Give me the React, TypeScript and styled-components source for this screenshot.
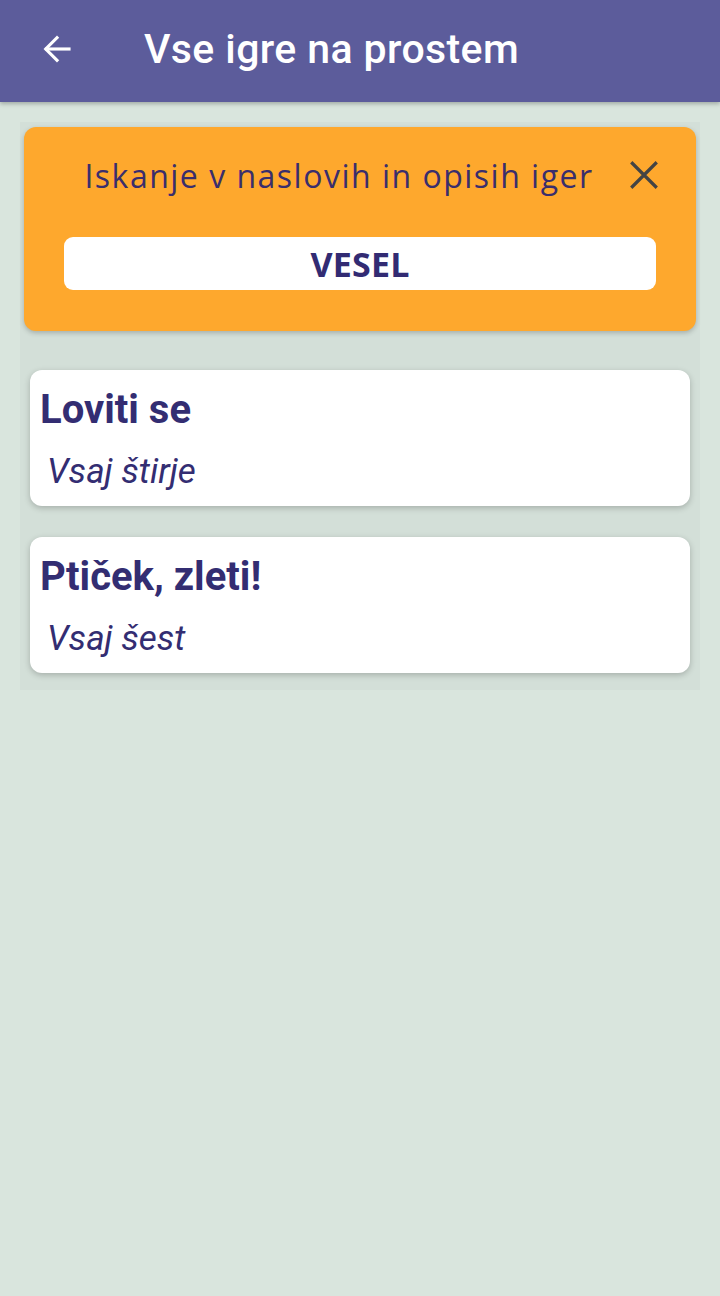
import React from "react";
import styled, { createGlobalStyle } from "styled-components";

const Global = createGlobalStyle`
  html, body { margin: 0; padding: 0; background: #d9e5dd; }
  body { font-family: Roboto, "Noto Sans", sans-serif; }
  * { box-sizing: border-box; }
`;

const Page = styled.div`
  width: 720px;
  min-height: 1296px;
  background: #d9e5dd;
`;

const Header = styled.header`
  height: 102px;
  background: #5c5c9b;
  display: flex;
  align-items: center;
  padding-left: 38px;
  padding-bottom: 4px;
  box-shadow: 0 2px 4px rgba(0, 0, 0, 0.25);
`;

const BackButton = styled.button`
  width: 38px;
  height: 38px;
  background: none;
  border: 0;
  padding: 0;
  display: flex;
  align-items: center;
  justify-content: center;
  margin-right: 68px;
`;

const Title = styled.h1`
  margin: 0;
  color: #ffffff;
  font-family: Roboto, sans-serif;
  font-weight: 500;
  font-size: 41px;
  letter-spacing: 0.4px;
  line-height: 1;
`;

const Main = styled.main`
  padding: 20px 20px;
`;

const Panel = styled.section`
  background: #d3dfd8;
  padding: 5px 4px 17px;
  display: flex;
  flex-direction: column;
`;

const SearchCard = styled.div`
  background: #fea82d;
  border-radius: 12px;
  box-shadow: 0 2px 5px rgba(0, 0, 0, 0.22);
  padding: 24px 34px 41px 40px;
  display: flex;
  flex-direction: column;
`;

const SearchHead = styled.div`
  display: flex;
  align-items: center;
  justify-content: space-between;
  height: 48px;
  margin-bottom: 38px;
`;

const SearchLabel = styled.span`
  flex: 1;
  text-align: center;
  color: #3a2e6c;
  font-family: "Open Sans", sans-serif;
  font-size: 32px;
  letter-spacing: 1.5px;
  padding-right: 12px;
`;

const CloseButton = styled.button`
  width: 36px;
  height: 36px;
  background: none;
  border: 0;
  padding: 0;
  display: flex;
  align-items: center;
  justify-content: center;
`;

const SearchInput = styled.div`
  margin-right: 6px;
  height: 53px;
  background: #ffffff;
  border-radius: 9px;
  display: flex;
  align-items: center;
  justify-content: center;
  color: #322b73;
  font-family: "Open Sans", sans-serif;
  font-weight: 700;
  font-size: 34px;
  letter-spacing: 0.2px;
`;

const List = styled.div`
  display: flex;
  flex-direction: column;
  gap: 31px;
  padding: 39px 6px 0;
`;

const Card = styled.article`
  background: #ffffff;
  border-radius: 12px;
  box-shadow: 0 2px 6px rgba(0, 0, 0, 0.22);
  height: 136px;
  padding: 17px 10px 0;
`;

const CardTitle = styled.h2`
  margin: 0;
  color: #332d72;
  font-family: Roboto, sans-serif;
  font-weight: 700;
  font-size: 40px;
  line-height: 46px;
`;

const CardSub = styled.p`
  margin: 19px 0 0 7px;
  color: #332d72;
  font-family: Roboto, sans-serif;
  font-style: italic;
  font-size: 35px;
  line-height: 40px;
`;

const games = [
  { title: "Loviti se", sub: "Vsaj štirje" },
  { title: "Ptiček, zleti!", sub: "Vsaj šest" },
];

export default function App() {
  return (
    <Page>
      <Global />
      <Header>
        <BackButton aria-label="Nazaj">
          <svg width="36" height="36" viewBox="0 0 24 24" fill="none" stroke="#ffffff" strokeWidth="2.1" strokeLinecap="square">
            <path d="M20 12H5" />
            <path d="M12 4.5L4.5 12L12 19.5" />
          </svg>
        </BackButton>
        <Title>Vse igre na prostem</Title>
      </Header>
      <Main>
        <Panel>
          <SearchCard>
            <SearchHead>
              <SearchLabel>Iskanje v naslovih in opisih iger</SearchLabel>
              <CloseButton aria-label="Zapri">
                <svg width="34" height="34" viewBox="0 0 24 24" fill="none" stroke="#444444" strokeWidth="2.3">
                  <path d="M3 3L21 21M21 3L3 21" />
                </svg>
              </CloseButton>
            </SearchHead>
            <SearchInput>VESEL</SearchInput>
          </SearchCard>
          <List>
            {games.map((g) => (
              <Card key={g.title}>
                <CardTitle>{g.title}</CardTitle>
                <CardSub>{g.sub}</CardSub>
              </Card>
            ))}
          </List>
        </Panel>
      </Main>
    </Page>
  );
}
